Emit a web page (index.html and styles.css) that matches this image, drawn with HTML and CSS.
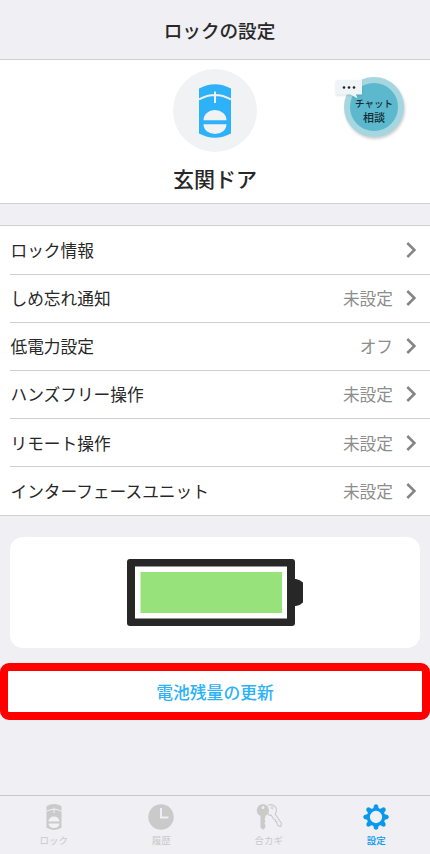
FILE: index.html
```html
<!DOCTYPE html>
<html lang="ja">
<head>
<meta charset="utf-8">
<title>ロックの設定</title>
<link rel="stylesheet" href="styles.css">
</head>
<body>
<svg width="0" height="0" class="defs">
  <symbol id="lock" viewBox="0 0 32 54">
    <path fill="currentColor" d="M0 4.500Q16-4 32 4.500V49.500Q16 58 0 49.500Z"/>
    <g class="cut-line"><path d="M0 15.300Q16 6.500 32 15.300M16 7.500V19"/></g>
    <path class="cut" d="M4.500 36.300A11.500 10.400 0 0 1 27.500 36.300ZM4.500 40.300A11.500 9.800 0 0 0 27.500 40.300Z"/>
  </symbol>
</svg>
<header class="header">ロックの設定</header>
<main>
  <section class="hero">
    <div class="avatar"><svg class="lock-icon"><use href="#lock"/></svg></div>
    <h1>玄関ドア</h1>
    <div class="chat">
      <span>チャット</span><span>相談</span>
      <svg class="bubble" viewBox="0 0 26 20"><path fill="#eff5f7" d="M0 0H26V14.500H20L21.500 18.500L14.500 14.500H0Z"/><g fill="#222"><circle cx="8" cy="7.500" r="1.300"/><circle cx="13" cy="7.500" r="1.300"/><circle cx="18" cy="7.500" r="1.300"/></g></svg>
    </div>
  </section>
  <ul class="list">
    <li><span>ロック情報</span><svg class="chev" viewBox="0 0 10 16"><path d="M1.300 1L8.400 8L1.300 15"/></svg></li>
    <li><span>しめ忘れ通知</span><em>未設定</em><svg class="chev" viewBox="0 0 10 16"><path d="M1.300 1L8.400 8L1.300 15"/></svg></li>
    <li><span>低電力設定</span><em>オフ</em><svg class="chev" viewBox="0 0 10 16"><path d="M1.300 1L8.400 8L1.300 15"/></svg></li>
    <li><span>ハンズフリー操作</span><em>未設定</em><svg class="chev" viewBox="0 0 10 16"><path d="M1.300 1L8.400 8L1.300 15"/></svg></li>
    <li><span>リモート操作</span><em>未設定</em><svg class="chev" viewBox="0 0 10 16"><path d="M1.300 1L8.400 8L1.300 15"/></svg></li>
    <li><span>インターフェースユニット</span><em>未設定</em><svg class="chev" viewBox="0 0 10 16"><path d="M1.300 1L8.400 8L1.300 15"/></svg></li>
  </ul>
  <section class="battery-card">
    <svg class="battery" viewBox="0 0 176 67"><path fill="#272727" d="M167 20H169Q173 20.500 176 23.500V43.500Q173 46.500 169 47H167Z"/><rect width="168" height="67" rx="3" fill="#272727"/><rect x="8" y="7.500" width="152" height="52" fill="#fff"/><rect x="13.500" y="13" width="141.500" height="41" fill="#97e27a"/></svg>
  </section>
  <button class="update">電池残量の更新</button>
</main>
<nav class="tabs">
  <a><svg class="tab-lock"><use href="#lock-small"/><symbol id="lock-small" viewBox="0 0 32 54"><use href="#lock" width="32" height="54"/></symbol></svg><span>ロック</span></a>
  <a><svg viewBox="0 0 26 26"><circle cx="13" cy="13" r="12.700" fill="#cacaca"/><path d="M13 4V13.500H20.500" fill="none" stroke="#efeff4" stroke-width="2"/></svg><span>履歴</span></a>
  <a><svg viewBox="0 0 26 26"><path d="M12.300 1.500C15-.3 19.500.8 20.300 4.500C20.800 7 20 8.800 19.200 10L25.500 19.400L24.900 22.300L22.300 21.900L20.900 19.300L21 17.900L19.400 17.300L19.200 15.500L17.800 15.200L15.300 11.400C14.200 11.500 13 11 12 10" fill="none" stroke="#cacaca" stroke-width="1.100"/><circle cx="16.200" cy="3.700" r="1.100" fill="none" stroke="#cacaca" stroke-width=".9"/><path fill="#cacaca" fill-rule="evenodd" d="M7 .3A6 6 0 0 1 9.300 11.800V14.300L8.300 15.300L9.300 16.500V18L8.300 19L9.300 20.200V23.500L7 25.700L4.500 23.500V11.800A6 6 0 0 1 7 .3ZM7 2A1.500 1.500 0 1 0 7 5A1.500 1.500 0 1 0 7 2Z"/></svg><span>合カギ</span></a>
  <a class="active"><svg viewBox="-13 -13 26 26"><circle r="7.700" fill="none" stroke="currentColor" stroke-width="3.100"/><g fill="currentColor"><path id="tooth" d="M-2.900-8L-2-11.600Q0-14 2-11.600L2.900-8Z"/><use href="#tooth" transform="rotate(45)"/><use href="#tooth" transform="rotate(90)"/><use href="#tooth" transform="rotate(135)"/><use href="#tooth" transform="rotate(180)"/><use href="#tooth" transform="rotate(225)"/><use href="#tooth" transform="rotate(270)"/><use href="#tooth" transform="rotate(315)"/></g></svg><span>設定</span></a>
</nav>
</body>
</html>
```
FILE: styles.css
```css
* { box-sizing: border-box; }
body {
  margin: 0;
  height: 854px;
  display: flex;
  flex-direction: column;
  background: #efeff4;
  color: #272727;
  font-family: "Noto Sans CJK JP", sans-serif;
  overflow: hidden;
}
.defs { position: absolute; }
.header {
  height: 60px;
  padding-left: 9px;
  border-bottom: 1px solid #cfcfcf;
  text-align: center;
  font-size: 18.6px;
  font-weight: 500;
  line-height: 59px;
}
main { flex: 1; }
.hero {
  position: relative;
  height: 144px;
  padding-top: 9px;
  background: #fff;
  border-bottom: 1px solid #cfcfcf;
  display: flex;
  flex-direction: column;
  align-items: center;
}
.avatar {
  width: 84px;
  height: 83px;
  border-radius: 50%;
  background: #f1f2f4;
  color: #2db1f8;
  display: grid;
  place-items: center;
}
.lock-icon { width: 32px; height: 54px; }
.cut { fill: #f1f2f4; }
.cut-line { fill: none; stroke: #f1f2f4; stroke-width: 2; }
h1 {
  margin: 10px 0 0;
  font-size: 21px;
  line-height: 32px;
  font-weight: 500;
}
.chat {
  position: absolute;
  left: 344px;
  top: 17px;
  width: 60px;
  height: 60px;
  border: 6px solid #a6d7e0;
  border-radius: 50%;
  background: #5cb9cd;
  box-shadow: 1px 2px 3px #0003;
  display: flex;
  flex-direction: column;
  align-items: center;
  justify-content: center;
  font-size: 11px;
  line-height: 13.5px;
  font-weight: 500;
  color: #142b34;
  padding-top: 7px;
}
.chat span { white-space: nowrap; }
.chat span:first-child { font-size: 9.5px; }
.bubble {
  position: absolute;
  left: -14.5px;
  top: -3px;
  width: 26px;
  height: 20px;
  filter: drop-shadow(0 1px 1px #0002);
}
.list {
  list-style: none;
  margin: 21.4px 0 0;
  padding: 0 0 0 10px;
  background: #fff;
  border-top: 1px solid #cfcfcf;
  border-bottom: 1px solid #cfcfcf;
}
.list li {
  height: 48.15px;
  display: flex;
  align-items: center;
  padding-right: 14px;
  font-size: 16.7px;
  border-bottom: 1px solid #cfcfcf;
}
.list li:last-child { border-bottom: 0; }
.list span { flex: 1; padding-left: .5px; }
.list em { font-style: normal; color: #8d8d8d; margin-right: 13px; }
.chev { width: 10px; height: 16px; fill: none; stroke: #858585; stroke-width: 2.5; }
.battery-card {
  height: 111px;
  margin: 20.7px 10px 15px;
  border-radius: 13px;
  background: #fff;
  display: grid;
  place-items: center;
}
.battery { width: 176px; height: 67px; }
.update {
  display: block;
  width: 430px;
  height: 57px;
  padding: 1px 0 0;
  border: 8px solid #f00;
  border-radius: 9px;
  background: #fff;
  color: #2db1f8;
  font: 500 16.8px "Noto Sans CJK JP", sans-serif;
}
.tabs {
  height: 59px;
  border-top: 1px solid #c8c8c8;
  display: grid;
  grid-template-columns: repeat(4, 1fr);
  color: #cacaca;
}
.tabs a {
  display: flex;
  flex-direction: column;
  align-items: center;
  padding-top: 8px;
  font-size: 9.5px;
  line-height: 14px;
}
.tabs svg { width: 26px; height: 26px; margin-bottom: 3px; }
.tabs .tab-lock { width: 16px; }
.tabs .active { color: #0898ed; font-weight: 500; }
```
